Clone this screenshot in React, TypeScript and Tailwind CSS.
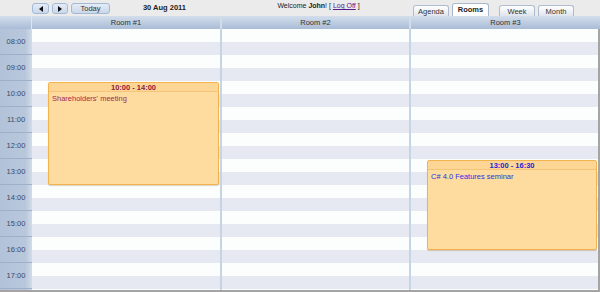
import React from 'react'

const hours = ['08:00', '09:00', '10:00', '11:00', '12:00', '13:00', '14:00', '15:00', '16:00', '17:00', '18:00']

interface CalEvent {
    time: string
    title: string
    top: number
    height: number
    tone: 'red' | 'blue'
}

function Stripes() {
    return (
        <div className="flex flex-col">
            {hours.map((h) => (
                <div key={h} className="flex flex-col">
                    <div className="h-[13px] bg-[#fcfefe]" />
                    <div className="h-[13px] bg-[#e6e9f1]" />
                </div>
            ))}
        </div>
    )
}

function EventBox({ ev }: { ev: CalEvent }) {
    const red = ev.tone === 'red'
    return (
        <div
            className="absolute left-[16px] right-[1px] bg-[#fedca0] border border-[#f3b24e] rounded-[2px] shadow-[0_1px_1px_rgba(120,80,0,0.25)] flex flex-col"
            style={{ top: ev.top, height: ev.height }}
        >
            <div
                className={`h-[9px] leading-[9px] text-center font-bold text-[7.5px] bg-[#fdd594] border-b border-[#f6c478] ${red ? 'text-[#8a1d42]' : 'text-[#2424d6]'}`}
            >
                {ev.time}
            </div>
            <div
                className={`px-[3px] pt-[2px] text-[7.5px] leading-[10px] ${red ? 'text-[#a8294e]' : 'text-[#2e2ee0]'}`}
            >
                {ev.title}
            </div>
        </div>
    )
}

function Tab({ label, active }: { label: string; active?: boolean }) {
    return active ? (
        <div className="h-[13px] w-[37px] bg-white border border-b-0 border-[#a9b8cb] rounded-t-[3px] text-center font-bold text-[7.5px] leading-[12px] text-[#222]">
            {label}
        </div>
    ) : (
        <div className="h-[11px] w-[36px] bg-gradient-to-b from-white to-[#dfe5ee] border border-b-0 border-[#aebcce] rounded-t-[3px] text-center text-[7.5px] leading-[12px] text-[#333]">
            {label}
        </div>
    )
}

export default function App() {
    const room1: CalEvent = { time: '10:00 - 14:00', title: "Shareholders' meeting", top: 53, height: 103, tone: 'red' }
    const room3: CalEvent = { time: '13:00 - 16:30', title: 'C# 4.0 Features seminar', top: 131, height: 90, tone: 'blue' }

    return (
        <div className="w-[600px] h-[292px] overflow-hidden bg-white font-['Liberation_Sans',Arial,sans-serif] text-[#333]">
            {/* toolbar */}
            <div className="h-[16px] bg-[#ebebeb] flex pl-[32px]">
                <div className="flex gap-[3px] pt-[3px]">
                    <button className="h-[11px] w-[17px] rounded-[3px] border border-[#a4b9d4] bg-gradient-to-b from-[#e4ecf7] to-[#c9d8eb] flex items-center justify-center">
                        <svg width="4" height="6" viewBox="0 0 4 6">
                            <path d="M4 0 L0 3 L4 6 Z" fill="#111" />
                        </svg>
                    </button>
                    <button className="h-[11px] w-[16px] rounded-[3px] border border-[#a4b9d4] bg-gradient-to-b from-[#e4ecf7] to-[#c9d8eb] flex items-center justify-center">
                        <svg width="4" height="6" viewBox="0 0 4 6">
                            <path d="M0 0 L4 3 L0 6 Z" fill="#111" />
                        </svg>
                    </button>
                    <button className="h-[11px] w-[39px] rounded-[3px] border border-[#a4b9d4] bg-gradient-to-b from-[#e4ecf7] to-[#c9d8eb] text-[7.5px] leading-[9px] text-[#333]">
                        Today
                    </button>
                </div>
                <div className="w-[109px] text-center font-bold text-[7.5px] leading-[16px] text-[#222]">
                    30 Aug 2011
                </div>
                <div className="w-[194px] pl-[5px] text-center text-[7px] leading-[12px] text-[#222]">
                    Welcome <span className="font-bold">John</span>! [ <span className="underline text-[#551a8b]">Log Off</span> ]
                </div>
                <div className="flex items-end">
                    <Tab label="Agenda" />
                    <div className="ml-[3px]">
                        <Tab label="Rooms" active />
                    </div>
                    <div className="ml-[10px]">
                        <Tab label="Week" />
                    </div>
                    <div className="ml-[3px]">
                        <Tab label="Month" />
                    </div>
                </div>
            </div>

            {/* room header */}
            <div className="h-[13px] flex bg-gradient-to-b from-[#d3deec] to-[#a9bcd6] text-[7.5px] leading-[13px] text-[#333]">
                <div className="w-[32px] border-r border-[#dce5f0]" />
                <div className="w-[190px] border-r-2 border-[#d3ddea] text-center">Room #1</div>
                <div className="w-[189px] border-r-2 border-[#d3ddea] text-center">Room #2</div>
                <div className="flex-1 text-center">Room #3</div>
            </div>

            {/* day grid */}
            <div className="h-[263px] flex border-b-2 border-[#a4a4a4] overflow-hidden">
                <div className="w-[32px] flex flex-col bg-gradient-to-r from-[#b2c2d8] via-[#b8c7dc] via-80% to-[#d2dce9]">
                    {hours.map((h, i) => (
                        <div
                            key={h}
                            className="h-[26px] shrink-0 border-b border-[#9eb0c8] flex items-center justify-center text-[7.5px] text-[#3d4a63]"
                        >
                            {i < 10 ? h : ''}
                        </div>
                    ))}
                </div>
                <div className="w-[190px] relative border-r-2 border-[#c6d5e4]">
                    <Stripes />
                    <EventBox ev={room1} />
                </div>
                <div className="w-[189px] relative border-r-2 border-[#c6d5e4]">
                    <Stripes />
                </div>
                <div className="flex-1 relative border-r-2 border-[#a4a4a4]">
                    <Stripes />
                    <EventBox ev={room3} />
                </div>
            </div>
        </div>
    )
}
